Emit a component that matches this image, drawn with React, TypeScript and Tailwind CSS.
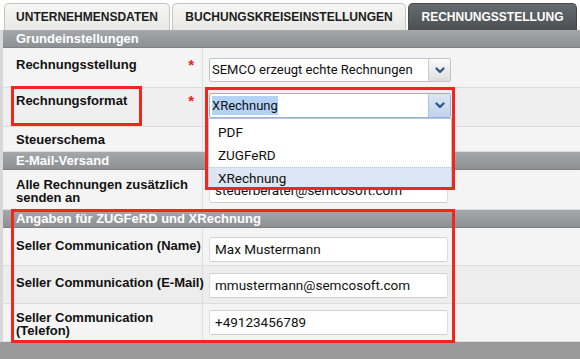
import React from 'react'

const Chevron = ({ color = '#2d5190' }: { color?: string }) => (
  <svg width="10" height="7" viewBox="0 0 10 7">
    <path d="M1.5 1.5 L5 5 L8.5 1.5" fill="none" stroke={color} strokeWidth="2.2" strokeLinecap="round" strokeLinejoin="round" />
  </svg>
)

function Tab({ label, active, width }: { label: string; active?: boolean; width: string }) {
  return (
    <div
      className={
        active
          ? `${width} h-[27px] rounded-t-[5px] bg-gradient-to-b from-[#656b6e] to-[#4b5053] border border-[#464b4e] border-b-0 flex items-center justify-center text-white text-[12px] font-bold`
          : `${width} h-[27px] rounded-t-[5px] bg-gradient-to-b from-[#f6f6f4] to-[#e8e8e5] border border-[#c4c4c2] border-b-0 flex items-center justify-center text-[#1c1c1c] text-[12px] font-bold`
      }
    >
      {label}
    </div>
  )
}

function Header({ children }: { children: React.ReactNode }) {
  return (
    <div className="h-[18px] bg-gradient-to-b from-[#a5a8aa] to-[#8e9193] border-b border-[#7e8183] pl-[13px] flex items-center text-white text-[13px] font-bold">
      {children}
    </div>
  )
}

function Select({ value, focused, className }: { value: React.ReactNode; focused?: boolean; className: string }) {
  return (
    <div
      className={`${className} w-[242px] bg-white flex rounded-[2px] border ${
        focused ? 'border-[#93b3db]' : 'border-[#bcc4cd]'
      } font-['Roboto',Arial,sans-serif] text-[13px] text-[#111]`}
    >
      <div className="flex-1 flex items-center pl-[2px]">{value}</div>
      <div
        className={`w-[22px] flex items-center justify-center border-l ${
          focused ? 'border-[#a9c2e2] bg-gradient-to-b from-[#dbe6f4] to-[#c2d4ec]' : 'border-[#c7ccd2] bg-gradient-to-b from-[#fafafa] to-[#dedede]'
        }`}
      >
        <Chevron />
      </div>
    </div>
  )
}

function Input({ value, className }: { value: string; className: string }) {
  return (
    <div
      className={`${className} w-[239px] h-[25px] bg-white rounded-[2px] border border-[#dedede] border-t-[#d2d2d2] border-b-[#cfcfcf] pl-[5px] flex items-center font-['Roboto',Arial,sans-serif] text-[13.5px] text-[#111]`}
    >
      {value}
    </div>
  )
}

function Row({
  height,
  label,
  labelPad,
  star,
  bg = 'bg-[#f4f4f4]',
  children,
}: {
  height: string
  label: React.ReactNode
  labelPad: string
  star?: boolean
  bg?: string
  children?: React.ReactNode
}) {
  return (
    <div className={`${height} ${bg} flex border-b border-[#dddddd]`}>
      <div className={`w-[200px] border-r border-[#dddddd] pl-[13px] pr-[8px] ${labelPad} flex justify-between items-start`}>
        <div className="text-[13px] leading-[13px] font-bold text-[#111] whitespace-nowrap">{label}</div>
        {star && <span className="text-[#e8211b] text-[15px] font-bold leading-[13px]">*</span>}
      </div>
      <div className="flex-1 pl-[6px]">{children}</div>
    </div>
  )
}

export default function App() {
  return (
    <div className="w-[580px] h-[359px] overflow-hidden bg-white relative flex flex-col font-['Liberation_Sans',Arial,sans-serif]">
      <div className="h-[30px] pt-[3px] pl-[4px] flex gap-[2px] items-end">
        <Tab label="UNTERNEHMENSDATEN" width="w-[166px]" />
        <Tab label="BUCHUNGSKREISEINSTELLUNGEN" width="w-[234px]" />
        <Tab label="RECHNUNGSSTELLUNG" width="w-[169px]" active />
      </div>

      <div className="border-l-[3px] border-[#d8d8d8]">
        <Header>Grundeinstellungen</Header>
        <Row height="h-[40px]" label="Rechnungsstellung" labelPad="pt-[10px]" star>
          <Select className="mt-[10px] h-[24px]" value="SEMCO erzeugt echte Rechnungen" />
        </Row>
        <Row height="h-[39px]" label="Rechnungsformat" labelPad="pt-[6px]" star bg="bg-[#efefef]">
          <Select
            className="mt-[5px] h-[25px]"
            focused
            value={<span className="bg-[#b3d2f6]">XRechnung</span>}
          />
        </Row>
        <Row height="h-[25px]" label="Steuerschema" labelPad="pt-[6px]">
          <Select className="mt-[1px] h-[22px]" value="" />
        </Row>
        <Header>E-Mail-Versand</Header>
        <Row height="h-[40px]" label={<>Alle Rechnungen zusätzlich<br />senden an</>} labelPad="pt-[8px]">
          <Input className="mt-[8px]" value="steuerberater@semcosoft.com" />
        </Row>
        <Header>Angaben für ZUGFeRD und XRechnung</Header>
        <Row height="h-[38px]" label="Seller Communication (Name)" labelPad="pt-[11px]">
          <Input className="mt-[9px]" value="Max Mustermann" />
        </Row>
        <Row height="h-[38px]" label="Seller Communication (E-Mail)" labelPad="pt-[10px]" bg="bg-[#ededed]">
          <Input className="mt-[7px]" value="mmustermann@semcosoft.com" />
        </Row>
        <Row height="h-[38px]" label={<>Seller Communication<br />(Telefon)</>} labelPad="pt-[7px]">
          <Input className="mt-[6px]" value="+49123456789" />
        </Row>
      </div>

      <div className="flex-1 bg-[#9a9a9a]" />

      {/* open dropdown list */}
      <div className="absolute left-[208px] top-[118px] w-[244px] h-[70px] bg-white border border-[#b7c6d8] pt-[2px] font-['Roboto',Arial,sans-serif] text-[13.5px] text-[#111]">
        <div className="h-[23px] flex items-center pl-[9px]">PDF</div>
        <div className="h-[23px] flex items-center pl-[9px]">ZUGFeRD</div>
        <div className="h-[21px] flex items-center pl-[9px] bg-[#dde6f4] border-t border-dotted border-[#b9c9e2]">XRechnung</div>
      </div>

      {/* red annotation boxes */}
      <div className="absolute left-[11px] top-[86px] w-[131px] h-[40px] border-[3px] border-[#f5251b]" />
      <div className="absolute left-[205px] top-[87px] w-[250px] h-[103px] border-[3px] border-[#f5251b]" />
      <div className="absolute left-[11px] top-[209px] w-[444px] h-[134px] border-[3px] border-[#f5251b]" />
    </div>
  )
}
